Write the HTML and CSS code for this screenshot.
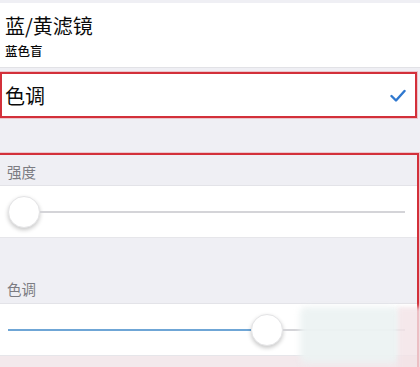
FILE: index.html
```html
<!DOCTYPE html>
<html lang="zh">
<head>
  <meta charset="UTF-8">
  <title>色调</title>
  <link rel="stylesheet" href="styles.css">
</head>
<body>
  <div class="screen">
    <div class="cell filter">
      <div class="title">蓝/黄滤镜</div>
      <div class="sub">蓝色盲</div>
    </div>

    <div class="cell hue marked">
      <span class="title">色调</span>
      <svg class="check" width="16" height="14" viewBox="0 0 16 14">
        <polyline points="1.5,7 6,11.5 14.5,2" fill="none" stroke="#2f78cf" stroke-width="2.4" stroke-linecap="round" stroke-linejoin="round"/>
      </svg>
    </div>

    <div class="group marked">
      <div class="label first">强度</div>
      <div class="slider">
        <div class="thumb"></div>
        <div class="track"></div>
      </div>

      <div class="label second">色调</div>
      <div class="slider">
        <div class="track filled" style="width:243px"></div>
        <div class="thumb"></div>
        <div class="track"></div>
      </div>
      <div class="tail"></div>

      <div class="smudge"></div>
      <div class="tint"></div>
    </div>
  </div>
</body>
</html>
```

FILE: styles.css
```css
* { box-sizing: border-box; }

body {
  margin: 0;
  background: #efeff4;
  font-family: "Noto Sans CJK SC", "Noto Sans", sans-serif;
  color: #0a0a0a;
}

.screen {
  width: 420px;
  height: 367px;
  overflow: hidden;
  padding-top: 3px;
}

.cell {
  background: #fff;
  padding-left: 5px;
}

.filter {
  height: 65px;
  padding-top: 9px;
  border-bottom: 1px solid #e2e2e6;
}

.filter .title {
  font-size: 20px;
  line-height: 28px;
}

.filter .sub {
  font-size: 12.5px;
  line-height: 18px;
  margin-top: 2px;
  font-weight: 500;
}

.marked {
  border: 2px solid #d3303a;
  box-shadow: 0 0 0 1px rgba(230, 120, 130, 0.35);
}

.hue {
  margin-top: 4px;
  width: 417px;
  height: 46px;
  display: flex;
  align-items: center;
  justify-content: space-between;
  padding-left: 3px;
  padding-right: 9px;
}

.hue .title {
  font-size: 20px;
}

.check { margin-top: 2px; }

.group {
  position: relative;
  margin-top: 35px;
  margin-left: -2px;
  width: 421px;
  height: 216px;
}

.label {
  font-size: 14.5px;
  color: #7c7c82;
  padding-left: 7px;
  border-bottom: 1px solid #e3e3e8;
}

.label.first {
  height: 31px;
  padding-top: 6px;
}

.label.second {
  height: 66px;
  padding-top: 40px;
}

.slider {
  background: #fff;
  height: 52px;
  display: flex;
  align-items: center;
  padding-left: 8px;
  padding-right: 12px;
  border-bottom: 1px solid #e6e6ea;
}

.track {
  flex: 1;
  height: 2px;
  background: #d4d4d8;
}

.track.filled {
  flex: none;
  background: #6fa6d6;
}

.thumb {
  width: 32px;
  height: 32px;
  border-radius: 50%;
  background: #fff;
  border: 1px solid #e4e4e6;
  box-shadow: 0 2px 4px rgba(0, 0, 0, 0.22);
  flex: none;
}

.tail {
  height: 12px;
  background: #f3e9ec;
}

.smudge {
  position: absolute;
  left: 300px;
  top: 152px;
  width: 100px;
  height: 56px;
  background: rgba(236, 242, 242, 0.95);
  border-radius: 6px;
  filter: blur(3px);
}

.tint {
  position: absolute;
  left: 398px;
  top: 152px;
  width: 30px;
  height: 70px;
  background: rgba(243, 226, 230, 0.8);
  filter: blur(2px);
}
```
